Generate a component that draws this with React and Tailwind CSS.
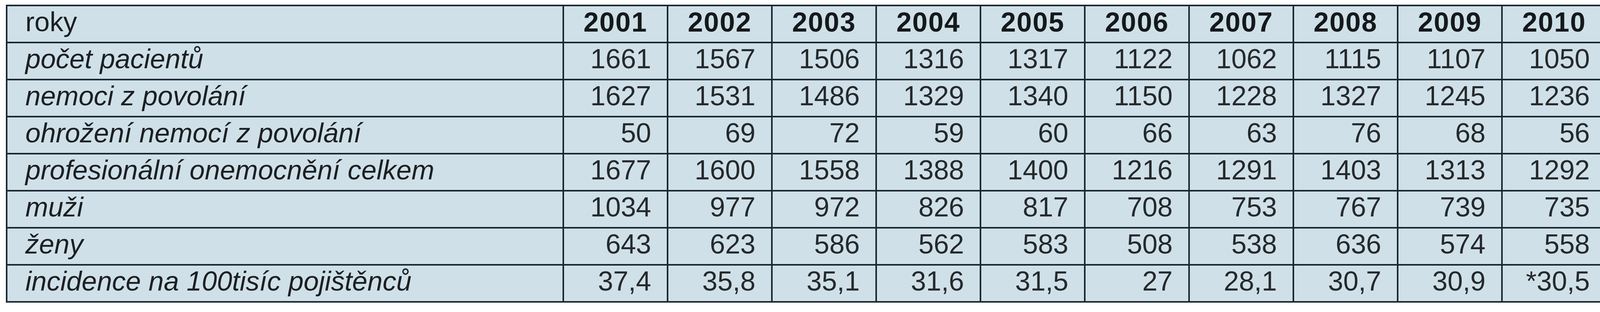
import React from 'react';

const years = ['2001', '2002', '2003', '2004', '2005', '2006', '2007', '2008', '2009', '2010'];

const rows = [
  { label: 'počet pacientů', values: ['1661', '1567', '1506', '1316', '1317', '1122', '1062', '1115', '1107', '1050'] },
  { label: 'nemoci z povolání', values: ['1627', '1531', '1486', '1329', '1340', '1150', '1228', '1327', '1245', '1236'] },
  { label: 'ohrožení nemocí z povolání', values: ['50', '69', '72', '59', '60', '66', '63', '76', '68', '56'] },
  { label: 'profesionální onemocnění celkem', values: ['1677', '1600', '1558', '1388', '1400', '1216', '1291', '1403', '1313', '1292'] },
  { label: 'muži', values: ['1034', '977', '972', '826', '817', '708', '753', '767', '739', '735'] },
  { label: 'ženy', values: ['643', '623', '586', '562', '583', '508', '538', '636', '574', '558'] },
  { label: 'incidence na 100tisíc pojištěnců', values: ['37,4', '35,8', '35,1', '31,6', '31,5', '27', '28,1', '30,7', '30,9', '*30,5'] },
];

export default function App() {
  return (
    <div className="w-[4147px] h-[800px] bg-white pl-[15px] pt-[12px] font-['Liberation_Sans',Arial,sans-serif] text-[70px] leading-normal">
      <div className="grid grid-cols-[1425px_repeat(10,267px)] w-fit border-l-4 border-t-4 border-[#1a2730] bg-[#cfe0e8]">
        {/* Header */}
        <div className="h-[95px] border-r-4 border-b-4 border-[#1a2730] flex items-center pl-[46px] pb-[10px] text-[#1c1f22]">
          roky
        </div>
        {years.map((y) => (
          <div
            key={y}
            className="h-[95px] border-r-4 border-b-4 border-[#1a2730] flex items-center justify-center pb-[8px] font-bold text-[#15191c] tracking-[2px]"
          >
            {y}
          </div>
        ))}

        {/* Body */}
        {rows.map((row) => (
          <React.Fragment key={row.label}>
            <div className="h-[95px] border-r-4 border-b-4 border-[#1a2730] flex items-center pl-[46px] pb-[10px] italic text-[#1c1f22] whitespace-nowrap">
              {row.label}
            </div>
            {row.values.map((v, i) => (
              <div
                key={i}
                className="h-[95px] border-r-4 border-b-4 border-[#1a2730] flex items-center justify-end pr-[40px] pb-[10px] text-[#25292c]"
              >
                {v}
              </div>
            ))}
          </React.Fragment>
        ))}
      </div>
    </div>
  );
}
